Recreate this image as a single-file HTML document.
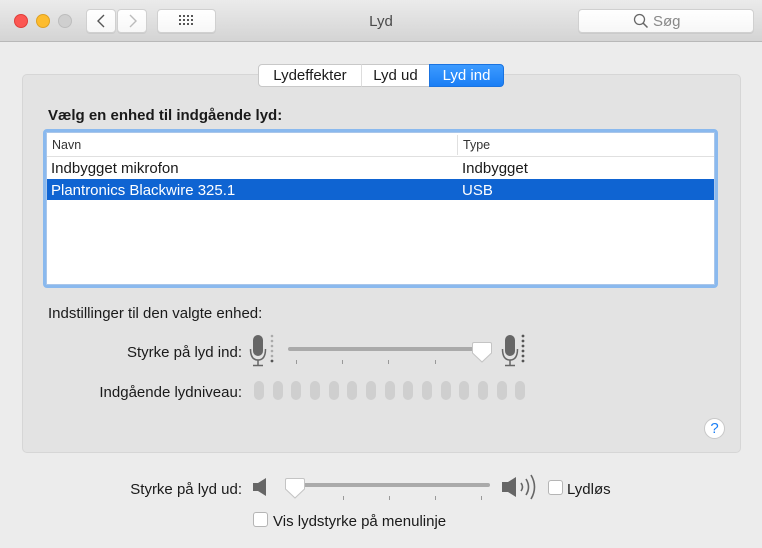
<!DOCTYPE html>
<html><head><meta charset="utf-8">
<style>
*{box-sizing:border-box;margin:0;padding:0}
body{width:762px;height:548px;background:#ececec;font-family:"Liberation Sans",sans-serif;font-size:15px;color:#1a1a1a;position:relative;overflow:hidden}
.a{position:absolute}
.t{margin-top:2px}
.tb{left:0;top:0;width:762px;height:42px;background:linear-gradient(#ebebeb,#d4d4d4);border-bottom:1px solid #b8b8b8}
.btn{background:linear-gradient(#fff,#f7f7f7);border:1px solid #d0d0d0;border-radius:4px;box-shadow:0 1px 0 rgba(0,0,0,.06)}
.grp{left:22px;top:74px;width:719px;height:379px;background:#e3e3e3;border:1px solid #d6d6d6;border-radius:5px}
.tab{top:64px;height:23px;line-height:22px;text-align:center;font-size:15px;background:#fff;border:1px solid #c8c8c8}
.pill{top:381px;width:10px;height:19px;border-radius:5px;background:#cfcfcf}
.tick{width:1px;height:4px;background:#999}
.cb{width:15px;height:15px;background:#fff;border:1px solid #b5b5b5;border-radius:3px}
</style></head><body>
<div class="a tb"></div>
<div class="a" style="left:14px;top:14px;width:14px;height:14px;border-radius:50%;background:#fc5753;border:1px solid #df3e3a"></div>
<div class="a" style="left:36px;top:14px;width:14px;height:14px;border-radius:50%;background:#fdbc2e;border:1px solid #dea123"></div>
<div class="a" style="left:58px;top:14px;width:14px;height:14px;border-radius:50%;background:#cfcfcf;border:1px solid #bdbdbd"></div>
<div class="a btn" style="left:86px;top:9px;width:30px;height:24px"></div>
<div class="a btn" style="left:117px;top:9px;width:30px;height:24px"></div>
<svg class="a" style="left:86px;top:9px" width="62" height="24"><path d="M18 6 L12 12 L18 18" stroke="#555" stroke-width="1.4" fill="none"/><path d="M44 6 L50 12 L44 18" stroke="#bbb" stroke-width="1.4" fill="none"/></svg>
<div class="a btn" style="left:157px;top:9px;width:59px;height:24px"></div>
<svg class="a" style="left:179px;top:15px" width="16" height="12"><g fill="#555"><rect x="0" y="0" width="2" height="2"/><rect x="4" y="0" width="2" height="2"/><rect x="8" y="0" width="2" height="2"/><rect x="12" y="0" width="2" height="2"/><rect x="0" y="4" width="2" height="2"/><rect x="4" y="4" width="2" height="2"/><rect x="8" y="4" width="2" height="2"/><rect x="12" y="4" width="2" height="2"/><rect x="0" y="8" width="2" height="2"/><rect x="4" y="8" width="2" height="2"/><rect x="8" y="8" width="2" height="2"/><rect x="12" y="8" width="2" height="2"/></g></svg>
<div class="a" style="left:0;top:13px;width:762px;text-align:center;font-size:15px;color:#4a4a4a">Lyd</div>
<div class="a btn" style="left:578px;top:9px;width:176px;height:24px"></div>
<svg class="a" style="left:633px;top:13px" width="16" height="16"><circle cx="6.5" cy="6.5" r="5" stroke="#666" stroke-width="1.3" fill="none"/><path d="M10 10 L14.5 14.5" stroke="#666" stroke-width="1.5"/></svg>
<div class="a" style="left:653px;top:13px;color:#888;font-size:15px">Søg</div>

<div class="a grp"></div>
<div class="a tab" style="left:258px;width:104px;border-radius:4px 0 0 4px">Lydeffekter</div>
<div class="a tab" style="left:361px;width:69px;border-left:1px solid #ddd">Lyd ud</div>
<div class="a tab" style="left:429px;width:75px;border-radius:0 4px 4px 0;background:linear-gradient(#3d9bff,#1a7ef5);border-color:#1a73e0;color:#fff">Lyd ind</div>

<div class="a" style="left:48px;top:107px;font-weight:bold">Vælg en enhed til indgående lyd:</div>
<div class="a" style="left:43px;top:129px;width:675px;height:159px;border:3px solid #8ab9ee;border-radius:4px;background:#fff"></div>
<div class="a" style="left:46px;top:132px;width:669px;height:153px;border:1px solid #a9c6ea;background:#fff"></div>
<div class="a" style="left:47px;top:156px;width:667px;height:1px;background:#e0e0e0"></div>
<div class="a" style="left:457px;top:135px;width:1px;height:20px;background:#e0e0e0"></div>
<div class="a" style="left:52px;top:138px;font-size:12.5px;color:#333">Navn</div>
<div class="a" style="left:463px;top:138px;font-size:12.5px;color:#333">Type</div>
<div class="a" style="left:51px;top:160px">Indbygget mikrofon</div>
<div class="a" style="left:462px;top:160px">Indbygget</div>
<div class="a" style="left:47px;top:179px;width:667px;height:21px;background:#0f64d2"></div>
<div class="a" style="left:51px;top:182px;color:#fff">Plantronics Blackwire 325.1</div>
<div class="a" style="left:462px;top:182px;color:#fff">USB</div>

<div class="a" style="left:48px;top:305px">Indstillinger til den valgte enhed:</div>
<div class="a" style="left:0;width:242px;text-align:right;top:344px">Styrke på lyd ind:</div>
<div class="a" style="left:0;width:242px;text-align:right;top:384px">Indgående lydniveau:</div>

<svg class="a" style="left:248px;top:333px" width="30" height="34"><rect x="5" y="2" width="10" height="21" rx="5" fill="#666"/><path d="M2.5 16 Q2.5 27 10 27 Q17.5 27 17.5 16" stroke="#666" stroke-width="1.5" fill="none"/><path d="M10 27 V32 M5 32.5 H15" stroke="#666" stroke-width="1.5"/><g fill="#aaa"><circle cx="24" cy="3" r="1.3"/><circle cx="24" cy="8" r="1.3"/><circle cx="24" cy="13" r="1.3"/><circle cx="24" cy="18" r="1.3"/><circle cx="24" cy="23" r="1.3"/></g><circle cx="24" cy="28" r="1.4" fill="#555"/></svg>
<svg class="a" style="left:500px;top:333px" width="30" height="34"><rect x="5" y="2" width="10" height="21" rx="5" fill="#666"/><path d="M2.5 16 Q2.5 27 10 27 Q17.5 27 17.5 16" stroke="#666" stroke-width="1.5" fill="none"/><path d="M10 27 V32 M5 32.5 H15" stroke="#666" stroke-width="1.5"/><g fill="#555"><circle cx="23" cy="3" r="1.4"/><circle cx="23" cy="8" r="1.4"/><circle cx="23" cy="13" r="1.4"/><circle cx="23" cy="18" r="1.4"/><circle cx="23" cy="23" r="1.4"/><circle cx="23" cy="28" r="1.4"/></g></svg>
<div class="a" style="left:288px;top:347px;width:196px;height:4px;border-radius:2px;background:#aaa"></div>
<div class="a tick" style="left:296px;top:360px"></div><div class="a tick" style="left:342px;top:360px"></div><div class="a tick" style="left:388px;top:360px"></div><div class="a tick" style="left:435px;top:360px"></div>
<svg class="a" style="left:471px;top:341px" width="22" height="24"><path d="M3 1.5 H19 Q20.5 1.5 20.5 3 V12 L11 21 L1.5 12 V3 Q1.5 1.5 3 1.5Z" fill="#fff" stroke="#c4c4c4"/></svg>

<div class="a pill" style="left:254px"></div><div class="a pill" style="left:273px"></div><div class="a pill" style="left:291px"></div><div class="a pill" style="left:310px"></div><div class="a pill" style="left:329px"></div><div class="a pill" style="left:347px"></div><div class="a pill" style="left:366px"></div><div class="a pill" style="left:385px"></div><div class="a pill" style="left:403px"></div><div class="a pill" style="left:422px"></div><div class="a pill" style="left:441px"></div><div class="a pill" style="left:459px"></div><div class="a pill" style="left:478px"></div><div class="a pill" style="left:497px"></div><div class="a pill" style="left:515px"></div>

<div class="a" style="left:704px;top:418px;width:21px;height:21px;border-radius:50%;background:#fff;border:1px solid #c8c8c8;color:#1a7ef5;text-align:center;line-height:19px;font-size:15px">?</div>

<div class="a" style="left:0;width:242px;text-align:right;top:481px">Styrke på lyd ud:</div>
<svg class="a" style="left:252px;top:477px" width="18" height="20"><path d="M1 6 H6 L14 1 V19 L6 14 H1Z" fill="#666"/></svg>
<div class="a" style="left:292px;top:483px;width:198px;height:4px;border-radius:2px;background:#aaa"></div>
<div class="a tick" style="left:343px;top:496px"></div><div class="a tick" style="left:389px;top:496px"></div><div class="a tick" style="left:435px;top:496px"></div><div class="a tick" style="left:481px;top:496px"></div>
<svg class="a" style="left:284px;top:477px" width="22" height="24"><path d="M3 1.5 H19 Q20.5 1.5 20.5 3 V12 L11 21 L1.5 12 V3 Q1.5 1.5 3 1.5Z" fill="#fff" stroke="#c4c4c4"/></svg>
<svg class="a" style="left:501px;top:473px" width="38" height="28"><path d="M1 9 H7 L15 4 V24 L7 19 H1Z" fill="#666"/><path d="M20 10 Q23 14 20 18" stroke="#666" stroke-width="1.6" fill="none"/><path d="M25 6 Q30 14 25 22" stroke="#666" stroke-width="1.6" fill="none"/><path d="M30 2 Q37 14 30 26" stroke="#666" stroke-width="1.6" fill="none"/></svg>
<div class="a cb" style="left:548px;top:480px"></div>
<div class="a" style="left:567px;top:481px">Lydløs</div>
<div class="a cb" style="left:253px;top:512px"></div>
<div class="a" style="left:273px;top:513px">Vis lydstyrke på menulinje</div>
</body></html>
